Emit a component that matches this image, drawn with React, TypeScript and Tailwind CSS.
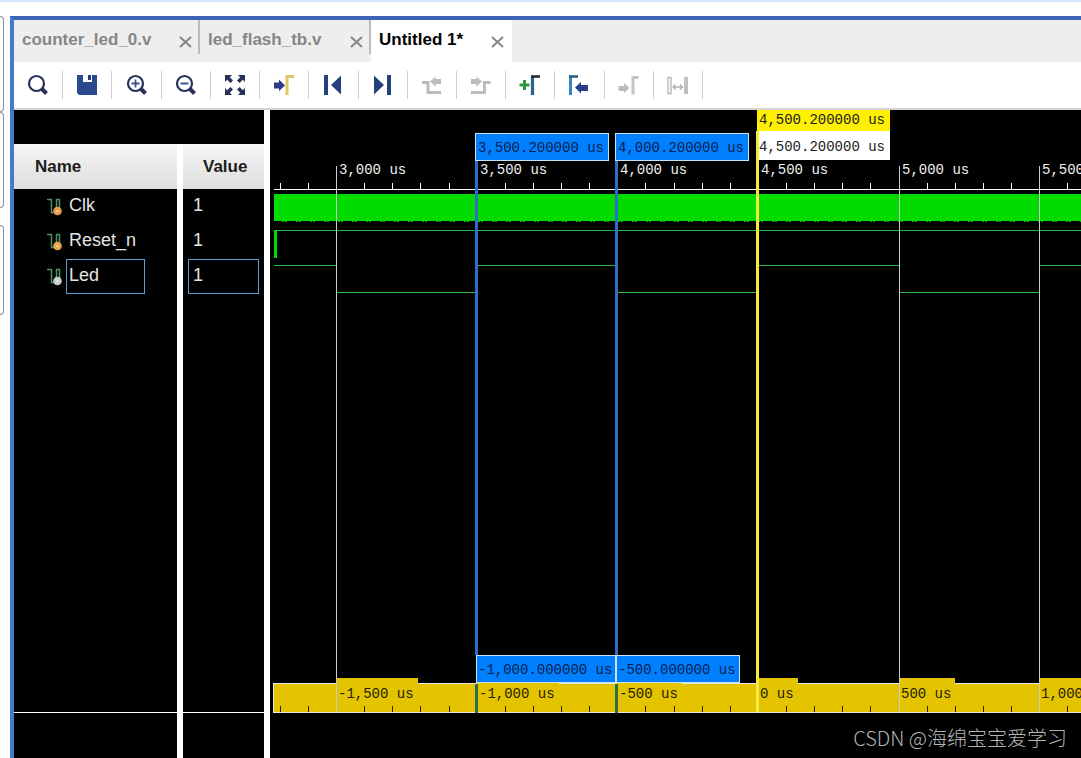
import { useState, type ReactNode } from 'react';

interface Signal {
  name: string;
  value: string;
  dot: string;
  selected?: boolean;
}

const signals: Signal[] = [
  { name: 'Clk', value: '1', dot: '#f09a4a' },
  { name: 'Reset_n', value: '1', dot: '#e8a84a' },
  { name: 'Led', value: '1', dot: '#c8ccc8', selected: true },
];

const tabs = [
  { title: 'counter_led_0.v', width: 'w-[186px]' },
  { title: 'led_flash_tb.v', width: 'w-[171px]' },
  { title: 'Untitled 1*', width: 'w-[141px]' },
];

// time axis, in us
const START = 3000;
const PX_PER_US = 0.2813;
const toX = (t: number) => Math.round(66 + (t - START) * PX_PER_US);

const majors = [3000, 3500, 4000, 4500, 5000, 5500];
const minors = Array.from({ length: 31 }, (_, i) => 2800 + i * 100).filter((t) => t % 500 !== 0);
const cursor = 4500;
const markers = [
  { time: 3500, label: '3,500.200000 us', delta: '-1,000.000000 us' },
  { time: 4000, label: '4,000.200000 us', delta: '-500.000000 us' },
];

const fmt = (n: number) => `${n.toLocaleString('en-US')} us`;

const Svg = ({ children }: { children: ReactNode }) => (
  <svg width="24" height="24" viewBox="0 0 24 24" fill="none" aria-hidden="true">
    {children}
  </svg>
);

const Lens = ({ children }: { children?: ReactNode }) => (
  <Svg>
    <circle cx="10.5" cy="10.5" r="7.5" stroke="#27315c" strokeWidth="2.2" />
    <path d="M16 16 L20.5 20.5" stroke="#27315c" strokeWidth="4" />
    {children}
  </Svg>
);

const tools: { label: string; disabled?: boolean; icon: ReactNode }[] = [
  { label: 'Search', icon: <Lens /> },
  {
    label: 'Save',
    icon: (
      <Svg>
        <path d="M2 2 H8 V9 H17 V2 H22 V22 H4 L2 20 Z" fill="#2b4a8e" />
        <path d="M13 2 H16 V7 H13 Z" fill="#2b3c78" />
      </Svg>
    ),
  },
  {
    label: 'Zoom In',
    icon: (
      <Lens>
        <path d="M6.5 10.5 H14.5 M10.5 6.5 V14.5" stroke="#3d5590" strokeWidth="1.8" />
      </Lens>
    ),
  },
  {
    label: 'Zoom Out',
    icon: (
      <Lens>
        <path d="M6.5 10.5 H14.5" stroke="#3d5590" strokeWidth="2" />
      </Lens>
    ),
  },
  {
    label: 'Zoom Fit',
    icon: (
      <Svg>
        <path
          d="M2 2 H9 L6.8 4.2 L10 7.4 L7.4 10 L4.2 6.8 L2 9 Z M22 2 H15 L17.2 4.2 L14 7.4 L16.6 10 L19.8 6.8 L22 9 Z M2 22 H9 L6.8 19.8 L10 16.6 L7.4 14 L4.2 17.2 L2 15 Z M22 22 H15 L17.2 19.8 L14 16.6 L16.6 14 L19.8 17.2 L22 15 Z"
          fill="#27315c"
        />
      </Svg>
    ),
  },
  {
    label: 'Go to Cursor',
    icon: (
      <Svg>
        <path d="M2 9.5 H7 V6.5 L13 12.5 L7 18 V15.5 H2 Z" fill="#283c86" />
        <path d="M15 22 V3.5 H22" stroke="#e2c468" strokeWidth="3" />
      </Svg>
    ),
  },
  {
    label: 'Go to Start',
    icon: (
      <Svg>
        <path d="M3 2 H7 V22 H3 Z M20 2.5 V21.5 L10 12 Z" fill="#263f7d" />
      </Svg>
    ),
  },
  {
    label: 'Go to End',
    icon: (
      <Svg>
        <path d="M16 2 H20 V22 H16 Z M3 2.5 V21.5 L13 12 Z" fill="#263f7d" />
      </Svg>
    ),
  },
  {
    label: 'Previous Transition',
    disabled: true,
    icon: (
      <Svg>
        <path d="M2 9.5 H8 V19.5 H21" stroke="#bcbcbc" strokeWidth="3" />
        <path d="M10 8.5 L15.5 3.5 V6 H21 V11 H15.5 V13.5 Z" fill="#bcbcbc" />
      </Svg>
    ),
  },
  {
    label: 'Next Transition',
    disabled: true,
    icon: (
      <Svg>
        <path d="M2 19.5 H15.5 V9.5 H21.5" stroke="#bcbcbc" strokeWidth="3" />
        <path d="M13 8.5 L7.5 3.5 V6 H2 V11 H7.5 V13.5 Z" fill="#bcbcbc" />
      </Svg>
    ),
  },
  {
    label: 'Add Marker',
    icon: (
      <Svg>
        <path d="M1.5 12 H11.5 M6.5 7 V17" stroke="#2e9442" strokeWidth="3" />
        <path d="M14.5 22 V3.5" stroke="#24648c" strokeWidth="3.2" />
        <path d="M13 3.5 H22" stroke="#202d3c" strokeWidth="2.6" />
      </Svg>
    ),
  },
  {
    label: 'Previous Marker',
    icon: (
      <Svg>
        <path d="M3.5 22 V3.5" stroke="#3488c0" strokeWidth="3" />
        <path d="M2 3.5 H11" stroke="#285c86" strokeWidth="2.6" />
        <path d="M8 14.5 L14 9 V12 H21 V18 H14 V20.5 Z" fill="#2a3c8a" />
      </Svg>
    ),
  },
  {
    label: 'Next Marker',
    disabled: true,
    icon: (
      <Svg>
        <path d="M1.5 13 H7 V10 L12.5 15 L7 20 V18 H1.5 Z" fill="#bcbcbc" />
        <path d="M16 21.5 V4.5 H21.5" stroke="#c4c4c4" strokeWidth="3" />
      </Svg>
    ),
  },
  {
    label: 'Swap Cursors',
    disabled: true,
    icon: (
      <Svg>
        <path d="M2 4.5 H5 V20.5 H2 Z" stroke="#b8b8b8" strokeWidth="1.4" />
        <path d="M18 4 H22 V21 H18 Z" fill="#c0c0c0" />
        <path d="M7 14 H16.5 M9.5 11.5 L7 14 L9.5 16.5 M14 11.5 L16.5 14 L14 16.5" stroke="#b0b0b0" strokeWidth="1.3" />
      </Svg>
    ),
  },
];

function TabBar() {
  const [active, setActive] = useState(2);

  return (
    <div className="flex h-[42px] bg-[#eeeeee]">
      {tabs.map((tab, i) => (
        <div
          key={tab.title}
          className={`flex shrink-0 items-start justify-between ${tab.width} ${i === active ? 'bg-white' : ''}`}
        >
          <button
            onClick={() => setActive(i)}
            className={`pt-2 pl-2 text-[17px] leading-6 font-bold whitespace-nowrap ${i === active ? 'text-black' : 'text-[#868686]'}`}
          >
            {tab.title}
          </button>
          <div className={`flex h-[34px] items-end ${i < 2 ? 'border-r-2 border-[#bcbcbc] pr-1.5' : 'pr-2'}`}>
            <button aria-label={`Close ${tab.title}`} className="pb-1.5">
              <svg className="block" width="13" height="12" viewBox="0 0 13 12" fill="none" stroke="#868686" strokeWidth="2">
                <path d="M1 1 L12 11 M12 1 L1 11" />
              </svg>
            </button>
          </div>
        </div>
      ))}
    </div>
  );
}

function Toolbar() {
  return (
    <div className="flex h-12 items-center border-b-2 border-[#d4d4d4] bg-white">
      <div className="grid w-[689px] shrink-0 grid-cols-14">
        {tools.map((tool) => (
          <button
            key={tool.label}
            aria-label={tool.label}
            disabled={tool.disabled}
            className="flex h-7 items-center justify-center border-r border-[#cfcfcf]"
          >
            {tool.icon}
          </button>
        ))}
      </div>
    </div>
  );
}

function SignalIcon({ dot }: { dot: string }) {
  return (
    <svg width="16" height="18" viewBox="0 0 16 18" fill="none" aria-hidden="true">
      <path d="M0 1.5 H4.5 V14.5 H9.5 V1.5 H12.5 V12" stroke="#4c9268" strokeWidth="1.5" />
      <circle cx="10.5" cy="13" r="4.3" fill={dot} />
      <circle cx="10.5" cy="13" r="1.6" fill="#ffffff" fillOpacity="0.35" />
    </svg>
  );
}

function SignalTable() {
  return (
    <div className="flex w-64 shrink-0 flex-col">
      <div className="h-[34px] shrink-0 border-r-6 border-white bg-black" />
      <table className="w-full flex-1 table-fixed border-separate border-spacing-0 bg-black text-left text-[18px] text-[#e4e4e4]">
        <thead>
          <tr className="h-[45px] bg-linear-to-b from-[#f6f6f6] to-[#dedede] text-[17px] text-[#1c1c1c]">
            <th className="w-[169px] border-r-6 border-white pl-[21px]">Name</th>
            <th className="border-r-6 border-white pl-5">Value</th>
          </tr>
        </thead>
        <tbody>
          {signals.map((s) => (
            <tr key={s.name} className="h-[35px]">
              <td className="border-r-6 border-white p-0">
                <div className="flex items-center pl-[33px]">
                  <SignalIcon dot={s.dot} />
                  <span
                    className={`ml-[3px] flex h-[35px] items-center border pb-0.5 pl-0.5 ${s.selected ? 'w-[79px] border-[#5e9cd0]' : 'border-transparent'}`}
                  >
                    {s.name}
                  </span>
                </div>
              </td>
              <td className="border-r-6 border-white p-0 pr-[5px] pl-[5px]">
                <div
                  className={`flex h-[35px] items-center border pb-0.5 pl-1 ${s.selected ? 'border-[#5e9cd0]' : 'border-transparent'}`}
                >
                  {s.value}
                </div>
              </td>
            </tr>
          ))}
          <tr>
            <td className="border-r-6 border-white" />
            <td className="border-r-6 border-white" />
          </tr>
        </tbody>
        <tfoot>
          <tr className="h-[46px]">
            <td className="border-t border-r-6 border-white" />
            <td className="border-t border-r-6 border-white" />
          </tr>
        </tfoot>
      </table>
    </div>
  );
}

function TopRuler() {
  return (
    <div className="relative h-20 shrink-0">
      <div className="absolute right-0 bottom-0 left-1 h-px bg-white" />
      {minors.map((t) => (
        <div key={t} className="absolute bottom-0 h-[7px] w-px bg-white" style={{ left: toX(t) }} />
      ))}
      {majors.map((t) => (
        <span key={t} className="absolute bottom-3 leading-4 text-[#f0f0f0]" style={{ left: toX(t) + 3 }}>
          {fmt(t)}
        </span>
      ))}
      {markers.map((m) => (
        <span
          key={m.time}
          className="absolute top-[23px] h-7 w-[134px] border border-[#c8e4f4] bg-[#0080ff] pl-0.5 leading-7 text-[#06204e]"
          style={{ left: toX(m.time) - 2 }}
        >
          {m.label}
        </span>
      ))}
      <div className="absolute top-0 w-[133px] text-[#202020]" style={{ left: toX(cursor) - 1 }}>
        <div className="h-[21px] bg-[#fff000] pl-0.5 leading-5">4,500.200000 us</div>
        <div className="h-[29px] bg-white pl-0.5 leading-8">4,500.200000 us</div>
      </div>
    </div>
  );
}

function Traces() {
  // Led toggles every 500 us
  const edges = [4, ...majors.map(toX), 4000];

  return (
    <svg className="min-h-[110px] w-full flex-1" aria-label="Waveforms">
      <rect x="4" y="4" width="100%" height="27" fill="#00dc00" />
      <path d="M12 31.5 H4000" stroke="#00b400" strokeDasharray="2 1 2 9" />
      <rect x="4" y="40" width="100%" height="1" fill="#2cb83c" />
      <rect x="4" y="40" width="3" height="28" fill="#00dc00" />
      {edges.slice(0, -1).map((x, i) => (
        <rect key={x} x={x} y={i % 2 === 0 ? 75 : 102} width={edges[i + 1] - x} height="1" fill="#2cb83c" />
      ))}
    </svg>
  );
}

function DeltaRuler() {
  return (
    <div className="relative ml-[3px] h-[30px] shrink-0 border border-r-0 border-[#e8e8e0] bg-[#e4c400]">
      {minors.map((t) => (
        <div key={t} className="absolute bottom-0 h-1.5 w-px bg-[#302800]" style={{ left: toX(t) - 4 }} />
      ))}
      {majors.map((t) => (
        <span
          key={t}
          className="absolute -top-1.5 h-6 bg-[#e4c400] pr-1 pl-0.5 leading-8 whitespace-nowrap text-[#241e00]"
          style={{ left: toX(t) - 4 }}
        >
          {fmt(t - cursor)}
        </span>
      ))}
      {markers.map((m) => (
        <span
          key={m.time}
          className="absolute -top-[29px] h-7 border border-[#c8e4f4] bg-[#0080ff] pr-[3px] pl-px leading-7 whitespace-nowrap text-[#06204e]"
          style={{ left: toX(m.time) - 5 }}
        >
          {m.delta}
        </span>
      ))}
    </div>
  );
}

function WavePane() {
  return (
    <div className="relative flex min-w-0 flex-1 flex-col overflow-hidden bg-black font-['Liberation_Mono',monospace] text-[14px] whitespace-nowrap">
      <TopRuler />
      <Traces />
      <DeltaRuler />
      <div className="h-[45px] shrink-0" />
      {majors
        .filter((t) => t !== cursor && !markers.some((m) => m.time === t))
        .map((t) => (
          <div key={t} className="absolute top-14 bottom-[46px] w-px bg-[#cccccc]" style={{ left: toX(t) }} />
        ))}
      {markers.map((m) => (
        <div key={m.time} className="absolute top-[51px] bottom-[103px] w-[3px] bg-[#2a70c8]" style={{ left: toX(m.time) - 2 }} />
      ))}
      {markers.map((m) => (
        <div key={m.time} className="absolute bottom-[45px] h-[29px] w-[3px] bg-[#2a7048]" style={{ left: toX(m.time) - 2 }} />
      ))}
      <div className="absolute top-[21px] bottom-[46px] w-[3px] bg-[#f4ec3c]" style={{ left: toX(cursor) - 2 }} />
    </div>
  );
}

export default function App() {
  return (
    <div className="relative flex h-screen flex-col overflow-hidden bg-white font-['Liberation_Sans',Arial,sans-serif]">
      <div className="h-0.5 shrink-0 bg-[#d9e5fa]" />
      <div className="flex min-h-0 flex-1 pt-3.5">
        {/* edges of the docked panels on the left */}
        <div className="w-2.5 shrink-0">
          <div className="h-24 w-1 rounded-r-md border border-l-0 border-[#8c8c8c]" />
          <div className="h-24 w-1 rounded-r-md border border-l-0 border-[#8c8c8c]" />
          <div className="mt-[17px] h-[90px] w-1 rounded-r-md border border-l-0 border-[#8c8c8c]" />
        </div>
        <div className="flex min-w-0 flex-1 flex-col border-t-4 border-l-4 border-t-[#3c66b4] border-l-[#4878c8]">
          <TabBar />
          <Toolbar />
          <div className="flex min-h-0 flex-1">
            <SignalTable />
            <WavePane />
          </div>
        </div>
      </div>
      <p className="absolute right-3.5 bottom-1 font-['Noto_Sans_CJK_SC',sans-serif] text-[20px] leading-8 font-light text-[#b4b4b4]">
        CSDN @海绵宝宝爱学习
      </p>
    </div>
  );
}
